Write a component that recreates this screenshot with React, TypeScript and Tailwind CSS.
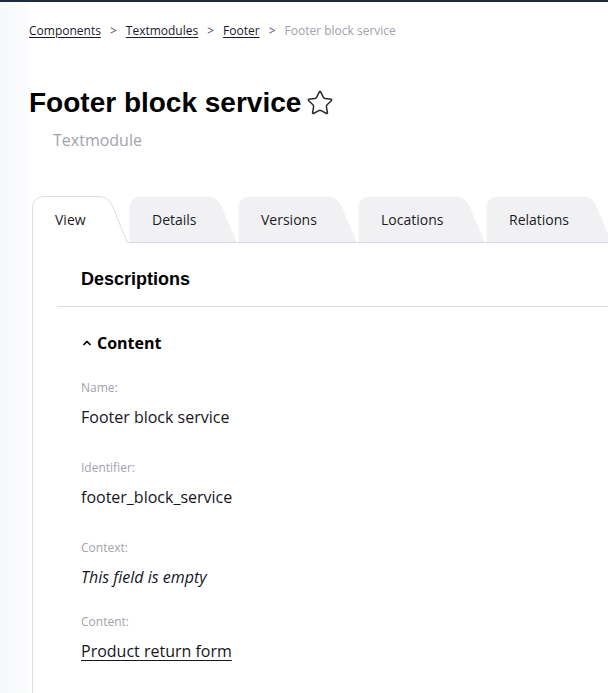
import { ChevronUp, Star } from 'lucide-react';

const tabs = [
  { label: 'View', width: 96 },
  { label: 'Details', width: 108 },
  { label: 'Versions', width: 119 },
  { label: 'Locations', width: 127 },
  { label: 'Relations', width: 126 },
];

const fields = [
  { label: 'Name:', value: 'Footer block service' },
  { label: 'Identifier:', value: 'footer_block_service' },
  { label: 'Context:', value: 'This field is empty', empty: true },
  { label: 'Content:', value: 'Product return form', link: true },
];

function TabShape({ width, active }: { width: number; active: boolean }) {
  const h = active ? 47 : 46;
  const w = width;
  const d = `M0.5 ${h} L0.5 13 Q0.5 0.5 13 0.5 L${w - 30} 0.5 Q${w - 20} 0.5 ${w - 16} 9 L${w - 0.5} ${h}`;
  return (
    <svg className="absolute inset-0" width={w} height={h} viewBox={`0 0 ${w} ${h}`}>
      <path d={d + ' Z'} fill={active ? '#ffffff' : '#f1f1f4'} />
      {active && <path d={d} fill="none" stroke="#dcdce6" strokeWidth="1" />}
    </svg>
  );
}

export default function App() {
  return (
    <div className="min-h-screen w-[608px] overflow-hidden bg-[linear-gradient(90deg,#f6f8fb_0px,#fafbfd_24px,#ffffff_34px)] font-['Open_Sans',sans-serif]">
      <div className="h-[2px] bg-[#1f2b3c]" />

      <nav className="flex items-center gap-[9px] pl-[29px] pt-[21px] text-[12px] leading-[16px]">
        <a className="text-[#1a1a2a] underline underline-offset-2">Components</a>
        <span className="text-[#55555f]">&gt;</span>
        <a className="text-[#1a1a2a] underline underline-offset-2">Textmodules</a>
        <span className="text-[#55555f]">&gt;</span>
        <a className="text-[#1a1a2a] underline underline-offset-2">Footer</a>
        <span className="text-[#55555f]">&gt;</span>
        <span className="text-[#a2a2aa]">Footer block service</span>
      </nav>

      <div className="mt-[47px] flex items-center pl-[29px]">
        <h1 className="font-['Liberation_Sans',Arial,sans-serif] text-[28px] leading-[34px] font-bold text-black">
          Footer block service
        </h1>
        <Star size={28} strokeWidth={1.3} className="ml-[5px] text-[#2a2a33]" />
      </div>
      <p className="mt-[8px] pl-[53px] text-[16px] leading-[24px] text-[#a3a3ab]">Textmodule</p>

      <div className="mt-[44px] ml-[32px]">
        <div className="flex items-end gap-[1px] border-b border-[#dcdce6]">
          {tabs.map((t, i) => (
            <div
              key={t.label}
              className={`relative shrink-0 ${i === 0 ? 'h-[47px] -mb-px' : 'h-[46px]'}`}
              style={{ width: t.width }}
            >
              <TabShape width={t.width} active={i === 0} />
              <span className="relative block pl-[23px] pt-[14px] text-[14px] leading-[20px] text-[#1c1c24]">
                {t.label}
              </span>
            </div>
          ))}
        </div>

        <div className="border-l border-[#dcdce6] bg-white pb-[40px] pl-[24px]">
          <div className="border-b border-[#dcdce6] pt-[24px] pb-[15px] pl-[24px]">
            <h2 className="font-['Liberation_Sans',Arial,sans-serif] text-[18px] leading-[24px] font-bold text-black">
              Descriptions
            </h2>
          </div>

          <div className="pl-[24px]">
            <div className="mt-[24px] flex items-center gap-[4px]">
              <ChevronUp size={12} strokeWidth={3.5} className="text-black" />
              <h3 className="text-[16px] leading-[24px] font-bold text-black">Content</h3>
            </div>

            <div className="mt-[25px] flex flex-col">
              {fields.map((f, i) => (
                <div key={f.label} className={i === 0 ? '' : i === 3 ? 'mt-[25px]' : 'mt-[31px]'}>
                  <div className="text-[12px] leading-[16px] text-[#a3a3ab]">{f.label}</div>
                  <div
                    className={`mt-[9px] text-[16px] leading-[24px] text-[#16161e] ${f.empty ? 'italic' : ''} ${
                      f.link ? 'underline underline-offset-[3px]' : ''
                    }`}
                  >
                    {f.value}
                  </div>
                </div>
              ))}
            </div>
          </div>
        </div>
      </div>
    </div>
  );
}
